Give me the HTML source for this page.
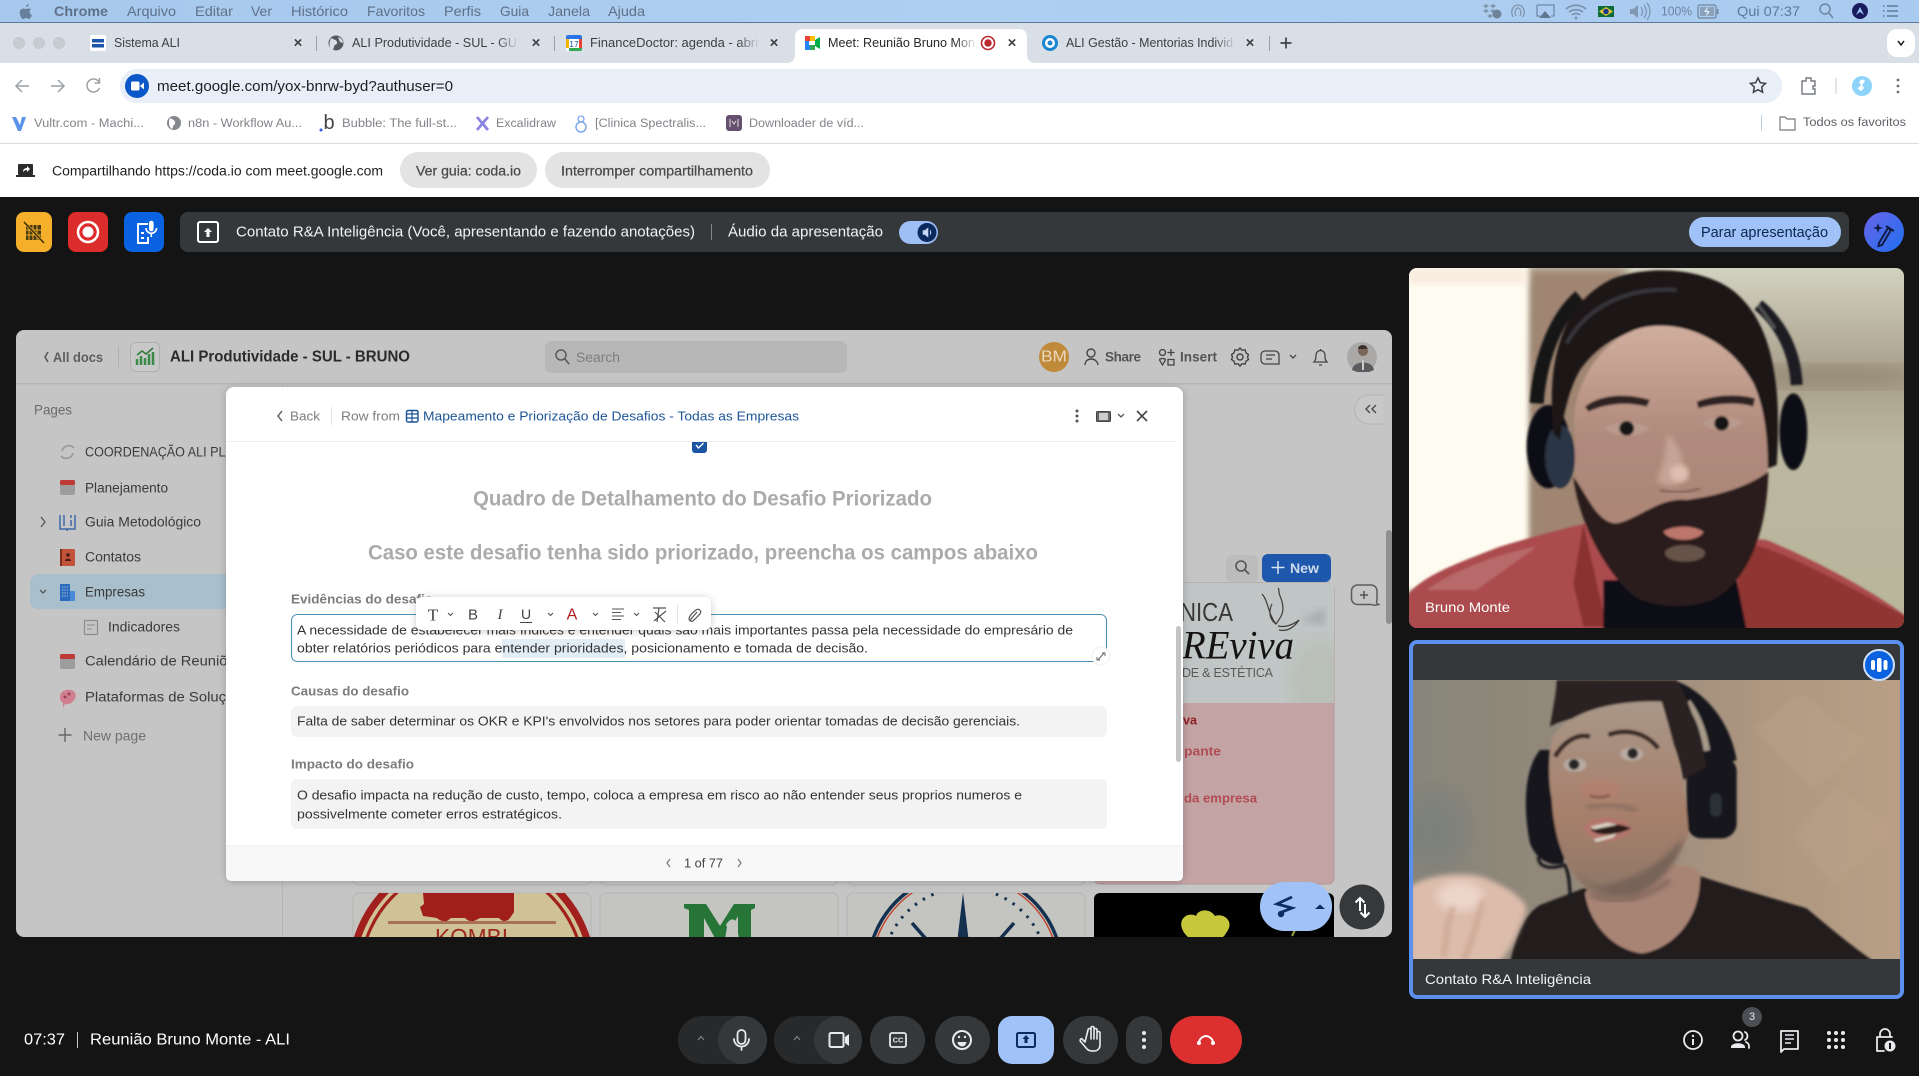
<!DOCTYPE html>
<html lang="pt-BR"><head><meta charset="utf-8"><title>Meet</title>
<style>
html,body{margin:0;padding:0;background:#141414;width:1919px;height:1076px;overflow:hidden}
svg{display:block}
text{font-family:"Liberation Sans",sans-serif;dominant-baseline:central;white-space:pre}
.m{font-size:14px;fill:#5f7088}
.t{font-size:12.5px;fill:#3c4043}
.x{font-size:15px;fill:#3c4043;font-weight:bold}
.bk{font-size:11.5px;fill:#808488}
.s{font-size:13px;fill:#8a8a8a}
.sd{font-size:13.5px;fill:#3a3a3a}
.body{font-size:13px;fill:#333}
.lab{font-size:13px;fill:#7c7c7c;font-weight:bold}
.w{fill:#fff}
.ic{fill:none;stroke:#e8eaed;stroke-width:2;stroke-linecap:round;stroke-linejoin:round}
</style></head><body>
<svg xmlns="http://www.w3.org/2000/svg" width="1919" height="1076" viewBox="0 0 1919 1076">
<defs>
<linearGradient id="mb" x1="0" y1="0" x2="1" y2="0"><stop offset="0" stop-color="#a5c8ec"/><stop offset=".5" stop-color="#afcff1"/><stop offset="1" stop-color="#a9cbef"/></linearGradient>
<linearGradient id="ai" x1="0" y1="0" x2="1" y2="1"><stop offset="0" stop-color="#6a64e8"/><stop offset="1" stop-color="#1f6ff0"/></linearGradient>
<linearGradient id="fadeg" x1="0" y1="0" x2="1" y2="0"><stop offset="0" stop-color="#d8dfe6" stop-opacity="0"/><stop offset="1" stop-color="#d8dfe6"/></linearGradient>
<linearGradient id="fadew" x1="0" y1="0" x2="1" y2="0"><stop offset="0" stop-color="#fff" stop-opacity="0"/><stop offset="1" stop-color="#fff"/></linearGradient>
<linearGradient id="wall1" x1="0" y1="0" x2="0" y2="1"><stop offset="0" stop-color="#d2d2c0"/><stop offset=".3" stop-color="#a89e8a"/><stop offset=".5" stop-color="#bcb8a0"/><stop offset="1" stop-color="#b8b59b"/></linearGradient>
<linearGradient id="wall2" x1="0" y1="0" x2="1" y2="0"><stop offset="0" stop-color="#87857a"/><stop offset=".35" stop-color="#94897a"/><stop offset=".7" stop-color="#ad9680"/><stop offset="1" stop-color="#b89f85"/></linearGradient>
<linearGradient id="skin1" x1="0" y1="0" x2="0" y2="1"><stop offset="0" stop-color="#d0ae9e"/><stop offset=".4" stop-color="#b08a7c"/><stop offset="1" stop-color="#a88272"/></linearGradient>
<linearGradient id="skin2" x1="0" y1="0" x2="0" y2="1"><stop offset="0" stop-color="#a99788"/><stop offset=".55" stop-color="#a8806c"/><stop offset="1" stop-color="#8d7767"/></linearGradient>
<filter id="b2"><feGaussianBlur stdDeviation="3"/></filter>
<filter id="b4"><feGaussianBlur stdDeviation="4"/></filter>
<filter id="b8"><feGaussianBlur stdDeviation="8"/></filter>
<filter id="b14"><feGaussianBlur stdDeviation="14"/></filter>
<filter id="b30"><feGaussianBlur stdDeviation="30"/></filter>
<filter id="sh" x="-20%" y="-20%" width="140%" height="140%"><feDropShadow dx="0" dy="1" stdDeviation="4" flood-color="#000" flood-opacity=".22"/></filter>
<clipPath id="coda"><rect x="16" y="330" width="1376" height="607" rx="8"/></clipPath>
<clipPath id="bt"><rect x="1409" y="268" width="495" height="360" rx="8"/></clipPath>
<clipPath id="ct"><rect x="1413" y="680" width="487" height="279"/></clipPath>
<clipPath id="box1"><rect x="1094" y="583" width="240" height="120"/></clipPath>
<clipPath id="kc"><rect x="353" y="893" width="238" height="44"/></clipPath>
<clipPath id="cc"><rect x="847" y="893" width="238" height="44"/></clipPath>
<clipPath id="bc"><rect x="1094" y="893" width="240" height="44"/></clipPath>
</defs>

<!-- mac menu bar -->
<rect width="1919" height="23" fill="url(#mb)"/>
<rect y="22" width="1919" height="1" fill="#5e7897"/>
<path d="M26 6c1-1 2-2 3-2 0 1-1 3-3 3zM22 9c1-1 3 0 4 0s3-1 5 0c-1 1-2 2-1 4 0 1 1 2 2 2-1 2-2 4-3 4s-2-1-3-1-2 1-3 1c-2 0-4-6-3-8 0-1 1-2 2-2z" fill="#69809c"/>
<text class="m" x="54" y="11" textLength="54" lengthAdjust="spacingAndGlyphs" font-weight="bold">Chrome</text>
<text class="m" x="127" y="11" textLength="49" lengthAdjust="spacingAndGlyphs">Arquivo</text>
<text class="m" x="195" y="11" textLength="38" lengthAdjust="spacingAndGlyphs">Editar</text>
<text class="m" x="251" y="11" textLength="21" lengthAdjust="spacingAndGlyphs">Ver</text>
<text class="m" x="291" y="11" textLength="57" lengthAdjust="spacingAndGlyphs">Histórico</text>
<text class="m" x="367" y="11" textLength="58" lengthAdjust="spacingAndGlyphs">Favoritos</text>
<text class="m" x="444" y="11" textLength="37" lengthAdjust="spacingAndGlyphs">Perfis</text>
<text class="m" x="500" y="11" textLength="29" lengthAdjust="spacingAndGlyphs">Guia</text>
<text class="m" x="548" y="11" textLength="42" lengthAdjust="spacingAndGlyphs">Janela</text>
<text class="m" x="608" y="11" textLength="37" lengthAdjust="spacingAndGlyphs">Ajuda</text>
<!-- menu right -->
<g fill="#7f95ae"><path d="M1483 6l3-2 3 2-3 2zM1490 6l3-2 3 2-3 2zM1483 11l3-2 3 2-3 2zM1490 11l3-2 3 2-3 2zM1487 16l3-2 3 2-3 2z"/><circle cx="1497" cy="14" r="4.5" fill="#6f8297"/></g>
<path d="M1513 17c-3-6 0-12 5-12s8 6 5 12M1516 16c-2-4 0-8 2-8s4 4 2 8" fill="none" stroke="#7f95ae" stroke-width="1.3"/>
<path d="M1537 5h17v11h-3M1540 16h-3V5" fill="none" stroke="#6f8aa8" stroke-width="1.3"/><path d="M1545 11l6 7h-12z" fill="#5f7690"/>
<path d="M1566 9c6-5 14-5 20 0M1569 12c4-3 10-3 14 0M1572 15c2-2 6-2 8 0" fill="none" stroke="#7a93ae" stroke-width="1.8"/><circle cx="1576" cy="18" r="1.5" fill="#7a93ae"/>
<rect x="1598" y="6" width="16" height="11" fill="#0c6b36"/><path d="M1606 7l7 4.5-7 4.5-7-4.5z" fill="#e6c53a"/><circle cx="1606" cy="11.5" r="2.8" fill="#1c3a86"/>
<path d="M1630 9h3l5-4v13l-5-4h-3z" fill="#8198b2"/><path d="M1641 7c2 3 2 6 0 9M1644 5c3 4 3 9 0 13M1647 3c4 5 4 12 0 17" fill="none" stroke="#7a93ae" stroke-width="1.2"/>
<text x="1661" y="11" font-size="13" fill="#6c84a0" textLength="31" lengthAdjust="spacingAndGlyphs">100%</text>
<rect x="1698" y="5" width="18" height="13" rx="2" fill="none" stroke="#6f879f" stroke-width="1.3"/><rect x="1700" y="7" width="14" height="9" fill="#8ba2ba"/><path d="M1708 6l-4 6h3l-1 5 4-6h-3z" fill="#d8e6f5"/><rect x="1717" y="9" width="1.5" height="5" fill="#6f879f"/>
<text x="1737" y="11" font-size="14" fill="#5f7a98" textLength="63" lengthAdjust="spacingAndGlyphs">Qui 07:37</text>
<circle cx="1825" cy="9" r="5" fill="none" stroke="#6c84a0" stroke-width="1.4"/><path d="M1829 13l4 5" stroke="#6c84a0" stroke-width="1.5"/>
<circle cx="1860" cy="11" r="8" fill="#181b5e"/><path d="M1856 15l4-8 4 8-4-3z" fill="#9dc4f0"/>
<path d="M1883 6h1.5M1887 6h11M1883 11h1.5M1887 11h11M1883 16h1.5M1887 16h11" stroke="#5f7a98" stroke-width="1.5"/>

<!-- tab strip -->
<rect y="23" width="1919" height="40" fill="#d8dfe6"/>
<g fill="#c6ccd2" stroke="#bcc2c8" stroke-width=".6"><circle cx="19" cy="43" r="5.5"/><circle cx="39" cy="43" r="5.5"/><circle cx="59" cy="43" r="5.5"/></g>
<!-- tab1 -->
<rect x="90" y="35" width="16" height="16" rx="2" fill="#fff"/><rect x="92" y="39" width="12" height="3.5" fill="#1a56a8"/><rect x="92" y="44" width="12" height="3.5" fill="#1a56a8"/>
<text class="t" x="114" y="43" textLength="66" lengthAdjust="spacingAndGlyphs">Sistema ALI</text>
<text class="x" x="298" y="43" text-anchor="middle">×</text>
<rect x="316" y="36" width="1" height="15" fill="#9aa0a6"/>
<!-- tab2 -->
<circle cx="336" cy="43" r="7.5" fill="#55595e"/><path d="M331 38c3 2 5 1 6 4s-3 2-3 5l-1 3c-3-1-5-5-2-12zM338 37c3 1 5 3 5 6l-3-1z" fill="#d8dfe6"/>
<text class="t" x="352" y="43" textLength="165" lengthAdjust="spacingAndGlyphs">ALI Produtividade - SUL - GU</text>
<rect x="497" y="36" width="22" height="15" fill="url(#fadeg)"/>
<text class="x" x="536" y="43" text-anchor="middle">×</text>
<rect x="554" y="36" width="1" height="15" fill="#9aa0a6"/>
<!-- tab3 -->
<rect x="566" y="35" width="16" height="16" rx="2" fill="#fff"/><path d="M566 37a2 2 0 012-2h12a2 2 0 012 2v2h-16z" fill="#2a73e8"/><path d="M566 39h3v9h-3z" fill="#f3b400"/><path d="M579 39h3v9h-3z" fill="#ea4335"/><path d="M569 48h13v1a2 2 0 01-2 2h-11z" fill="#34a853"/>
<text x="574" y="44" font-size="8.5" fill="#1a56a8" text-anchor="middle">17</text>
<text class="t" x="590" y="43" textLength="168" lengthAdjust="spacingAndGlyphs">FinanceDoctor: agenda - abri</text>
<rect x="738" y="36" width="22" height="15" fill="url(#fadeg)"/>
<text class="x" x="774" y="43" text-anchor="middle">×</text>
<!-- active tab -->
<path d="M786 63c6 0 9-3 9-9V37c0-5 3-8 8-8h216c5 0 8 3 8 8v17c0 6 3 9 9 9z" fill="#fff"/>
<rect x="805" y="36" width="14" height="14" rx="2" fill="#fff"/><path d="M805 36h5v5h-5z" fill="#ea4335"/><path d="M810 36h5v5h-5z" fill="#fbbc04"/><path d="M805 41h5v9h-5z" fill="#2684fc"/><path d="M810 45h5v5h-5z" fill="#34a853"/><path d="M815 40l5-3v12l-5-3z" fill="#00ac47"/><rect x="809" y="41" width="5" height="4" fill="#fff"/>
<text x="828" y="43" font-size="12.5" fill="#27292c" textLength="147" lengthAdjust="spacingAndGlyphs">Meet: Reunião Bruno Mon</text>
<rect x="955" y="36" width="22" height="15" fill="url(#fadew)"/>
<circle cx="988" cy="43" r="6.5" fill="none" stroke="#b9292d" stroke-width="1.6"/><circle cx="988" cy="43" r="3.7" fill="#b9292d"/>
<text class="x" x="1012" y="43" text-anchor="middle" fill="#222">×</text>
<!-- tab5 -->
<circle cx="1050" cy="43" r="8" fill="#1a86d0"/><circle cx="1050" cy="43" r="5" fill="#fff"/><circle cx="1050" cy="43" r="2.5" fill="#1a86d0"/>
<text class="t" x="1066" y="43" textLength="167" lengthAdjust="spacingAndGlyphs">ALI Gestão - Mentorias Individ</text>
<rect x="1214" y="36" width="22" height="15" fill="url(#fadeg)"/>
<text class="x" x="1250" y="43" text-anchor="middle">×</text>
<rect x="1269" y="36" width="1" height="15" fill="#9aa0a6"/>
<path d="M1286 37.5v11M1280.5 43h11" stroke="#3c4043" stroke-width="1.7"/>
<rect x="1887" y="29" width="28" height="28" rx="10" fill="#fff"/><path d="M1898 41l3 4 3-4" fill="none" stroke="#222" stroke-width="1.5"/>

<!-- address row -->
<rect y="63" width="1919" height="81" fill="#fff"/>
<path d="M786 63h-786v-1h786zM1036 62h883v1h-883z" fill="#d8dfe6"/>
<path d="M29 86H16M22 80l-6 6 6 6" fill="none" stroke="#9aa0a6" stroke-width="1.5"/>
<path d="M51 86h13M58 80l6 6-6 6" fill="none" stroke="#9aa0a6" stroke-width="1.5"/>
<path d="M99 82a6.5 6.5 0 10.5 6M99.5 78v5h-5" fill="none" stroke="#9aa0a6" stroke-width="1.5"/>
<rect x="120" y="69" width="1662" height="34" rx="17" fill="#e8eff9"/>
<circle cx="137" cy="86" r="12" fill="#0b57c8"/><rect x="131" y="81.5" width="8.5" height="9" rx="1.5" fill="#fff"/><path d="M140 86l4-3.5v7z" fill="#fff"/>
<text x="157" y="87" font-size="14.5" fill="#1f1f1f" textLength="296" lengthAdjust="spacingAndGlyphs">meet.google.com/yox-bnrw-byd?authuser=0</text>
<path d="M1759 79l2.300 4.700 5.200.7-3.800 3.600.9 5.200-4.600-2.500-4.600 2.500.9-5.200-3.800-3.600 5.200-.7z" fill="none" stroke="#3c4043" stroke-width="1.5" transform="translate(-1 -1)"/>
<path d="M1802 81h4v-3h5v3h4v5h-2v3h2v5h-13z" fill="none" stroke="#75797e" stroke-width="1.4"/>
<rect x="1835.5" y="78" width="1" height="16" fill="#c8ced4"/>
<circle cx="1862" cy="86" r="10" fill="#8ed4fa"/><path d="M1861 80c2-1 4 0 4 1l-3 4 2 3-3 3c-2-1-3-2-3-3l3-3-2-3z" fill="#fff"/>
<g fill="#6c7075"><circle cx="1898" cy="80" r="1.4"/><circle cx="1898" cy="86" r="1.4"/><circle cx="1898" cy="92" r="1.4"/></g>

<!-- bookmarks -->
<path d="M12 117h4l4 8 2-8h4l-5 14h-3z" fill="#5a94e8"/>
<text class="bk" x="34" y="124" textLength="110" lengthAdjust="spacingAndGlyphs">Vultr.com - Machi...</text>
<circle cx="174" cy="123" r="7" fill="#84888c"/><path d="M170 118c3 2 4 1 5 4s-2 2-2 5l-1 2c-3-2-4-6-2-11z" fill="#fff"/>
<text class="bk" x="188" y="124" textLength="114" lengthAdjust="spacingAndGlyphs">n8n - Workflow Au...</text>
<text x="329" y="123" font-size="20" fill="#444" text-anchor="middle">b</text><circle cx="321" cy="130" r="1.5" fill="#2f5be0"/>
<text class="bk" x="342" y="124" textLength="115" lengthAdjust="spacingAndGlyphs">Bubble: The full-st...</text>
<path d="M477 117l11 13M488 117l-11 13" stroke="#8a85e0" stroke-width="2.800"/>
<text class="bk" x="496" y="124" textLength="60" lengthAdjust="spacingAndGlyphs">Excalidraw</text>
<circle cx="581" cy="127" r="5" fill="none" stroke="#7fa8ea" stroke-width="1.5"/><circle cx="581" cy="119" r="3" fill="none" stroke="#7fa8ea" stroke-width="1.3"/>
<text class="bk" x="595" y="124" textLength="111" lengthAdjust="spacingAndGlyphs">[Clinica Spectralis...</text>
<rect x="726" y="115" width="16" height="16" rx="3" fill="#65506f"/><path d="M730 119v8M738 119v8M732 121l2 3 2-3" stroke="#ddd" fill="none"/>
<text class="bk" x="749" y="124" textLength="115" lengthAdjust="spacingAndGlyphs">Downloader de víd...</text>
<rect x="1761" y="115" width="1" height="16" fill="#bcd0ea"/>
<path d="M1780 117h5l2 2h8v11h-15z" fill="none" stroke="#75797e" stroke-width="1.2"/>
<text class="bk" x="1803" y="123" textLength="103" lengthAdjust="spacingAndGlyphs" style="fill:#5f6368">Todos os favoritos</text>
<rect y="143" width="1919" height="1" fill="#dcdcdc"/>

<!-- sharing bar -->
<rect y="144" width="1919" height="53" fill="#fff"/>
<rect x="18" y="164" width="15" height="11" rx="1" fill="#2b2b2b"/><rect x="16" y="175" width="19" height="2" fill="#2b2b2b"/><path d="M23 172c0-3 2-4 4-4v-2l3 3-3 3v-2c-2 0-3 1-4 2z" fill="#fff"/>
<text x="52" y="171" font-size="13.5" fill="#202124" textLength="331" lengthAdjust="spacingAndGlyphs">Compartilhando https://coda.io com meet.google.com</text>
<rect x="400" y="152" width="137" height="36" rx="18" fill="#e3e3e3"/>
<text x="416" y="171" font-size="13.5" fill="#4a4a4a" stroke="#4a4a4a" stroke-width=".25" textLength="105" lengthAdjust="spacingAndGlyphs">Ver guia: coda.io</text>
<rect x="545" y="152" width="225" height="36" rx="18" fill="#e3e3e3"/>
<text x="561" y="171" font-size="13.5" fill="#4a4a4a" stroke="#4a4a4a" stroke-width=".25" textLength="192" lengthAdjust="spacingAndGlyphs">Interromper compartilhamento</text>

<!-- meet top -->
<rect y="197" width="1919" height="879" fill="#141414"/>
<rect x="16" y="212" width="36" height="40" rx="8" fill="#f5af2b"/>
<rect x="26" y="225" width="15" height="15" fill="#4a3a10"/><path d="M29 225v15M33 225v15M37 225v15M26 230h15M26 235h15" stroke="#f5af2b"/><path d="M24 222l20 21" stroke="#f5af2b" stroke-width="3"/><path d="M24 222l20 21" stroke="#3a2d08" stroke-width="1.5"/>
<rect x="68" y="212" width="40" height="40" rx="8" fill="#dc2c2c"/><circle cx="88" cy="232" r="10" fill="none" stroke="#fff" stroke-width="2.5"/><circle cx="88" cy="232" r="5.5" fill="#fff"/>
<rect x="124" y="212" width="40" height="40" rx="8" fill="#0b62e0"/><path d="M148 224h-10v19h10v-6M141 233h3M141 238h3" fill="none" stroke="#fff" stroke-width="1.900"/><path d="M149 223a2.300 2.300 0 014.600 0v6a2.300 2.300 0 01-4.600 0z" fill="#fff"/><path d="M146 228a5.300 5.300 0 0010.600 0M151.300 234v3" fill="none" stroke="#fff" stroke-width="1.6"/>
<rect x="180" y="212" width="1669" height="40" rx="8" fill="#35383b"/>
<rect x="198" y="222" width="20" height="20" rx="2" fill="none" stroke="#fff" stroke-width="2"/><path d="M208 228l4 4h-2.500v5h-3v-5H204z" fill="#fff"/>
<text class="w" x="236" y="232" font-size="15" textLength="459" lengthAdjust="spacingAndGlyphs" style="fill:#f1f3f4">Contato R&amp;A Inteligência (Você, apresentando e fazendo anotações)</text>
<rect x="711" y="224" width="1" height="16" fill="#80868b"/>
<text x="728" y="232" font-size="15" fill="#f1f3f4" textLength="155" lengthAdjust="spacingAndGlyphs">Áudio da apresentação</text>
<rect x="899" y="221" width="39" height="23" rx="11.5" fill="#9dbff5"/><circle cx="927" cy="232.5" r="9.5" fill="#0b2a5e"/><path d="M923 230.5h2l3-2.500v9l-3-2.500h-2zM930 230c1 1.500 1 3.500 0 5" fill="#c6d8f6" stroke="#c6d8f6" stroke-width=".6"/>
<rect x="1689" y="217" width="152" height="30" rx="15" fill="#a0c2f8"/>
<text x="1701" y="233" font-size="14.5" fill="#0b2550" textLength="127" lengthAdjust="spacingAndGlyphs">Parar apresentação</text>
<circle cx="1884" cy="232" r="20" fill="url(#ai)"/><path d="M1879 243l9-15 3 2-9 15-3.500 1zM1886 226l8 5" fill="none" stroke="#111c44" stroke-width="2"/><path d="M1878 223l1.300 3.700 3.700 1.300-3.700 1.300-1.300 3.700-1.300-3.700-3.700-1.300 3.700-1.300z" fill="#111c44"/>

<!-- CODA -->
<g clip-path="url(#coda)">
<rect x="16" y="330" width="1376" height="607" fill="#c5c5c5"/>
<rect x="16" y="383" width="1376" height="1.5" fill="#b7b7b7"/>
<rect x="282" y="383" width="1" height="554" fill="#b5b5b5"/>

<!-- cards row 1 -->
<rect x="353" y="800" width="238" height="85" rx="6" fill="#c5c5c5" stroke="#b4b4b4"/>
<rect x="600" y="800" width="238" height="85" rx="6" fill="#c5c5c5" stroke="#b4b4b4"/>
<rect x="847" y="800" width="238" height="85" rx="6" fill="#c5c5c5" stroke="#b4b4b4"/>
<rect x="1094" y="583" width="240" height="301" rx="6" fill="#c3a3a4" stroke="#b59696"/>
<g clip-path="url(#box1)">
<rect x="1094" y="583" width="240" height="120" fill="#c0c5c5"/>
<ellipse cx="1320" cy="680" rx="30" ry="40" fill="#b9c0b7" filter="url(#b8)"/>
<path d="M1300 620l25-12v18z" fill="#a8adae" filter="url(#b4)"/>
<text x="1180" y="612" font-size="26" fill="#3a3838" textLength="53" lengthAdjust="spacingAndGlyphs">NICA</text>
<text x="1182" y="645" font-size="40" fill="#141212" font-family="Liberation Serif" font-style="italic" style="font-family:'Liberation Serif',serif" textLength="112" lengthAdjust="spacingAndGlyphs">REviva</text>
<text x="1182" y="673" font-size="12.5" fill="#5a5a5a" textLength="91" lengthAdjust="spacing">DE &amp; ESTÉTICA</text>
<path d="M1262 594c6 6 6 20 14 30 6-8 10-14 4-28-2-4 0-6-2-8M1272 604c-4 8-2 16 4 20M1278 626c8 2 16-2 21-6-4 6-10 12-20 10" fill="none" stroke="#433c3c" stroke-width="1.2"/>
</g>
<text x="1183" y="720" font-size="13" font-weight="bold" fill="#8e1d22" textLength="14" lengthAdjust="spacingAndGlyphs">va</text>
<text x="1184" y="751" font-size="13" font-weight="bold" fill="#b14c52" textLength="37" lengthAdjust="spacingAndGlyphs">pante</text>
<text x="1184" y="798" font-size="13" font-weight="bold" fill="#b14c52" textLength="73" lengthAdjust="spacingAndGlyphs">da empresa</text>

<!-- cards row 2 -->
<rect x="353" y="893" width="238" height="60" rx="6" fill="#c4c4c1" stroke="#b4b4b4"/>
<g clip-path="url(#kc)">
<path d="M351.700 945A124 124 0 01592.300 945z" fill="#a11f1c"/>
<path d="M359 945A117 117 0 01585 945z" fill="#cfc296"/>
<path d="M363 945A113 113 0 01581 945z" fill="#a11f1c"/>
<path d="M366.200 945A110 110 0 01577.800 945z" fill="#cfc296"/>
<path d="M423 893h91v19l-4 6c-3 4-8 4-11 0h-19l-6 3c-4 1-7-1-9-3h-14l-4 3c-4 1-8-1-10-3l-14-2-3-9 4-3z" fill="#a01f1b"/>
<rect x="388" y="921" width="168" height="3" fill="#a9715a"/>
<text x="435" y="938" font-size="24" fill="#9c2a22" textLength="73" lengthAdjust="spacingAndGlyphs">KOMBI</text>
</g>
<rect x="600" y="893" width="238" height="60" rx="6" fill="#c4c4c1" stroke="#b4b4b4"/>
<path d="M684 904h22l14 22 14-22h21v4l-4 2v30h-13v-24l-13 24h-9l-12-22v22h-15v-30l-5-2z" fill="#267536"/>
<path d="M729 921c4-4 9 0 8 6l2 12h-14l2-12c-2-2 0-4 2-6z" fill="#c4c4c1"/>
<rect x="847" y="893" width="238" height="60" rx="6" fill="#c4c4c1" stroke="#b4b4b4"/>
<g clip-path="url(#cc)">
<circle cx="965" cy="970" r="97" fill="none" stroke="#14304f" stroke-width="3.5"/>
<circle cx="965" cy="970" r="93.5" fill="none" stroke="#c0472f" stroke-width="1.5"/>
<circle cx="965" cy="970" r="82" fill="none" stroke="#14304f" stroke-width="3" stroke-dasharray="2.5 7"/>
<path d="M963 893l-6 50h12z" fill="#14304f"/>
<path d="M912 923l14 16M1014 923l-14 16" stroke="#14304f" stroke-width="3.5"/>
</g>
<rect x="1094" y="893" width="240" height="60" rx="6" fill="#000"/>
<g clip-path="url(#bc)"><path d="M1188 937c-9-8-9-19 0-22 4-1 7 0 8 1 2-7 14-8 19 0 8-3 17 4 14 12-2 4-4 7-6 9z" fill="#c8c83d"/></g>
<path d="M1292 936l4-8" stroke="#9a9a3a" stroke-width="2"/>

<!-- header -->
<path d="M48 352l-3 5 3 5" fill="none" stroke="#555" stroke-width="1.5"/>
<text x="53" y="357" font-size="14" font-weight="bold" fill="#5e5e5e" textLength="50" lengthAdjust="spacingAndGlyphs">All docs</text>
<rect x="118" y="347" width="1" height="20" fill="#b0b0b0"/>
<rect x="130.5" y="342.5" width="29" height="29" rx="5" fill="#c8c8c8" stroke="#b0b0b0"/>
<path d="M137 365v-6M141 365v-9M145 365v-7M149 365v-11M153 365v-13" stroke="#3a8a48" stroke-width="2.5"/><path d="M137 355l5-4 4 3 7-6" fill="none" stroke="#2e7a3b" stroke-width="1.5"/>
<text x="170" y="357" font-size="16" font-weight="bold" fill="#2b2b2b" textLength="240" lengthAdjust="spacingAndGlyphs">ALI Produtividade - SUL - BRUNO</text>
<rect x="545" y="341" width="302" height="32" rx="6" fill="#b7b7b7"/>
<circle cx="561" cy="355" r="5" fill="none" stroke="#5a5a5a" stroke-width="1.5"/><path d="M565 359l4 5" stroke="#5a5a5a" stroke-width="1.7"/>
<text x="576" y="357" font-size="14" fill="#7d7d7d" textLength="44" lengthAdjust="spacingAndGlyphs">Search</text>
<circle cx="1054" cy="357" r="15" fill="#bf8a3a"/><text x="1054" y="357" font-size="16" fill="#ead9bd" text-anchor="middle" textLength="26" lengthAdjust="spacingAndGlyphs">BM</text>
<circle cx="1091" cy="353" r="4" fill="none" stroke="#444" stroke-width="1.4"/><path d="M1085 365c0-8 12-8 13 0" fill="none" stroke="#444" stroke-width="1.4"/>
<text x="1105" y="357" font-size="13.5" font-weight="bold" fill="#555" textLength="36">Share</text>
<g fill="none" stroke="#444" stroke-width="1.3"><circle cx="1162.500" cy="352.500" r="3"/><path d="M1171 349v7M1167.500 352.500h7M1159.500 360c0-2 6-2 6 0l-3 5zM1168 359.500h6v5.500h-6z"/></g>
<text x="1180" y="357" font-size="13.5" font-weight="bold" fill="#555" textLength="37">Insert</text>
<g transform="translate(0 -1)" fill="none" stroke="#444" stroke-width="1.4"><circle cx="1240" cy="358" r="3"/><path d="M1240 349l2 2.300 3-.5 1 3 2.500 1.700-1 2.500 1 2.500-2.500 1.700-1 3-3-.5-2 2.300-2-2.300-3 .5-1-3-2.500-1.700 1-2.500-1-2.500 2.500-1.700 1-3 3 .5z"/></g>
<path d="M1265 351h10a4 4 0 014 4v9h-14a4 4 0 01-4-4v-5a4 4 0 014-4zM1266 355h9M1266 359h6" fill="none" stroke="#444" stroke-width="1.3"/>
<path d="M1290 355l3 3 3-3" fill="none" stroke="#444" stroke-width="1.3"/>
<path d="M1314 362c2-2 2-5 2-7a4.500 4.500 0 019 0c0 3 0 5 2 7zM1320.500 350v-1M1319 365h3" fill="none" stroke="#444" stroke-width="1.3"/>
<circle cx="1362" cy="357" r="15" fill="#aaa9a7"/><circle cx="1363" cy="351" r="5" fill="#7a6558"/><path d="M1363 345a5 4 0 014.500 4l-9.500 0a5 4 0 015-4z" fill="#3a302a"/><path d="M1352 370c1-10 21-10 22 0l-5 2h-12z" fill="#5a5c60"/><path d="M1362 360l2 0 0 10-2 0z" fill="#ccc"/>
<path d="M1383 395h-14a14 14 0 000 29h14" fill="#c8c8c8" stroke="#b4b4b4"/>
<path d="M1370 405l-4 4 4 4M1376 405l-4 4 4 4" fill="none" stroke="#4a4a4a" stroke-width="1.4"/>
<rect x="1386" y="530" width="6" height="94" rx="3" fill="#8f8f8f"/>

<!-- sidebar -->
<text x="34" y="410" font-size="13.5" fill="#6b6b6b" textLength="38" lengthAdjust="spacingAndGlyphs">Pages</text>
<rect x="30" y="574" width="210" height="35" rx="8" fill="#a9bfcc"/>
<path d="M74 448a7 7 0 00-12 3M61 456a7 7 0 0012-3" fill="none" stroke="#9b9b9b" stroke-width="1.7"/>
<text class="sd" x="85" y="452" textLength="158" lengthAdjust="spacingAndGlyphs">COORDENAÇÃO ALI PLAN</text>
<g><rect x="60" y="480" width="15" height="15" rx="2" fill="#9d9d9d"/><rect x="60" y="480" width="15" height="5" rx="1.5" fill="#bf3a36"/></g>
<text class="sd" x="85" y="488" textLength="83" lengthAdjust="spacingAndGlyphs">Planejamento</text>
<path d="M41 517l4 5-4 5" fill="none" stroke="#555" stroke-width="1.3"/>
<path d="M60 515v14h15v-14M67 529v2M64 515v11M71 515v3M71 520v6" fill="none" stroke="#3f6aa8" stroke-width="1.5"/>
<text class="sd" x="85" y="522" textLength="116" lengthAdjust="spacingAndGlyphs">Guia Metodológico</text>
<rect x="60" y="549" width="15" height="17" rx="1.5" fill="#c1533a"/><rect x="60" y="549" width="2" height="17" fill="#7e2f1d"/><circle cx="68" cy="555" r="1.8" fill="#4b1b0f"/><path d="M65 561c0-3 6-3 6 0z" fill="#4b1b0f"/>
<text class="sd" x="85" y="557" textLength="56" lengthAdjust="spacingAndGlyphs">Contatos</text>
<path d="M40 590l3 3 3-3" fill="none" stroke="#555" stroke-width="1.3"/>
<rect x="60" y="584" width="10" height="17" fill="#2c6cc0"/><rect x="70" y="591" width="5" height="10" fill="#4a8ad8"/><path d="M62 587h6M62 590h6M62 593h6M62 596h6" stroke="#a9bfcc" stroke-dasharray="1.5 1"/>
<text class="sd" x="85" y="592" textLength="60" lengthAdjust="spacingAndGlyphs">Empresas</text>
<rect x="84.5" y="620.5" width="13" height="14" rx="1" fill="none" stroke="#8c8c8c" stroke-width="1.2"/><path d="M87 625h8M87 629h5" stroke="#8c8c8c"/>
<text class="sd" x="108" y="627" textLength="72" lengthAdjust="spacingAndGlyphs">Indicadores</text>
<rect x="60" y="654" width="15" height="15" rx="2" fill="#9d9d9d"/><rect x="60" y="654" width="15" height="5" rx="1.5" fill="#bf3a36"/>
<text class="sd" x="85" y="661" textLength="158" lengthAdjust="spacingAndGlyphs">Calendário de Reuniões</text>
<path d="M60 697c0-5 5-8 10-7 5 0 7 5 5 9-3 4-6 6-10 5l-2 4v-5c-2-1-3-3-3-6z" fill="#cf7f8f"/><circle cx="65" cy="697" r="1.5" fill="#a03f5c"/><circle cx="69" cy="694" r="1.5" fill="#a03f5c"/>
<text class="sd" x="85" y="697" textLength="165" lengthAdjust="spacingAndGlyphs">Plataformas de Soluções</text>
<path d="M65 728v14M58.5 735h13" stroke="#666" stroke-width="1.4"/>
<text x="83" y="736" font-size="13.5" fill="#707070" textLength="63" lengthAdjust="spacingAndGlyphs">New page</text>

<!-- right controls -->
<rect x="1226" y="555" width="32" height="27" rx="6" fill="#bcbcbc"/>
<circle cx="1241" cy="566" r="5" fill="none" stroke="#555" stroke-width="1.6"/><path d="M1245 570l4 4" stroke="#555" stroke-width="1.8"/>
<rect x="1262" y="554" width="69" height="28" rx="6" fill="#1e58ac"/>
<path d="M1278 561v13M1271.500 567.500h13" stroke="#d8e2f0" stroke-width="1.5"/>
<text x="1290" y="568" font-size="14" font-weight="bold" fill="#cfdbec" textLength="29" lengthAdjust="spacingAndGlyphs">New</text>
<path d="M1357 585h14a6 6 0 016 6v9a3 3 0 001.5 4.5c-3 1-5 1-7 0h-14a6 6 0 01-6-6v-8a6 6 0 016-5.500z" fill="none" stroke="#5c5c5c" stroke-width="1.5"/><path d="M1364 591v8M1360 595h8" stroke="#555" stroke-width="1.5"/>
<rect x="1260" y="882" width="72" height="49" rx="24" fill="#a0c2f8"/>
<path d="M1292 897l-15 7 15 4-10 4" fill="none" stroke="#0c2c63" stroke-width="2.800"/><circle cx="1281" cy="914" r="3.200" fill="#0c2c63"/>
<path d="M1315 909h10l-5-4.500z" fill="#0c2c63"/>
<circle cx="1362" cy="907" r="22.5" fill="#36393b"/>
<path d="M1360 911v-13M1355.500 902.500l4.500-4.500 4.500 4.500M1365 904v13M1360.500 912.500l4.500 4.500 4.500-4.500" fill="none" stroke="#fff" stroke-width="2"/>

<!-- modal -->
<rect x="226" y="387" width="957" height="494" rx="8" fill="#fff" filter="url(#sh)"/>
<path d="M231 881a5 5 0 01-5-5v-30h957v30a5 5 0 01-5 5z" fill="#f8f8f8"/>
<rect x="226" y="845.5" width="957" height="1" fill="#eeeeee"/>
<rect x="226" y="441" width="950" height="1" fill="#efefef"/>
<path d="M282 411l-4 5 4 5" fill="none" stroke="#666" stroke-width="1.5"/>
<text x="290" y="416" font-size="13" fill="#7d7d7d" textLength="30" lengthAdjust="spacingAndGlyphs">Back</text>
<rect x="331" y="407" width="1" height="18" fill="#e4e4e4"/>
<text x="341" y="416" font-size="13" fill="#7d7d7d" textLength="59" lengthAdjust="spacingAndGlyphs">Row from</text>
<rect x="406.5" y="410.5" width="11.5" height="11.5" rx="1.5" fill="none" stroke="#1a5296" stroke-width="1.4"/><path d="M407 414h11M407 418h11M412 411v11" stroke="#1a5296" stroke-width="1.2"/>
<text x="423" y="416" font-size="13" fill="#1d5598" textLength="376" lengthAdjust="spacingAndGlyphs">Mapeamento e Priorização de Desafios - Todas as Empresas</text>
<g fill="#555"><circle cx="1077" cy="411" r="1.5"/><circle cx="1077" cy="416" r="1.5"/><circle cx="1077" cy="421" r="1.5"/></g>
<rect x="1096.5" y="411.5" width="14" height="10" rx="1" fill="#666" stroke="#444"/><rect x="1099" y="413" width="9" height="7" fill="#ccc"/>
<path d="M1118 414l3 3 3-3" fill="none" stroke="#555" stroke-width="1.3"/>
<path d="M1137 411l10 10M1147 411l-10 10" stroke="#444" stroke-width="1.6"/>
<path d="M692 442h15v8a3 3 0 01-3 3h-9a3 3 0 01-3-3z" fill="#1b55a4"/><path d="M696 445l2.500 3 5-5" fill="none" stroke="#fff" stroke-width="1.4"/>
<text x="473" y="499" font-size="21" font-weight="bold" fill="#ababab" textLength="459" lengthAdjust="spacingAndGlyphs">Quadro de Detalhamento do Desafio Priorizado</text>
<text x="368" y="553" font-size="21" font-weight="bold" fill="#ababab" textLength="670" lengthAdjust="spacingAndGlyphs">Caso este desafio tenha sido priorizado, preencha os campos abaixo</text>
<text class="lab" x="291" y="599" textLength="142" lengthAdjust="spacingAndGlyphs">Evidências do desafio</text>
<rect x="291.5" y="614.5" width="815" height="47" rx="6" fill="#fff" stroke="#4a92b8" stroke-width="1.1"/>
<rect x="502" y="639" width="123" height="19" fill="#e3edf6"/>
<text class="body" x="297" y="630" textLength="776" lengthAdjust="spacingAndGlyphs">A necessidade de estabelecer mais índices e entender quais são mais importantes passa pela necessidade do empresário de</text>
<text class="body" x="297" y="648" textLength="571" lengthAdjust="spacingAndGlyphs">obter relatórios periódicos para entender prioridades, posicionamento e tomada de decisão.</text>
<circle cx="1101" cy="656" r="9" fill="#fff" stroke="#efefef"/><path d="M1098 660l6-7M1102 653h3v3M1097 657v3h3" fill="none" stroke="#666"/>
<text class="lab" x="291" y="691" textLength="118" lengthAdjust="spacingAndGlyphs">Causas do desafio</text>
<rect x="291" y="706" width="816" height="31" rx="6" fill="#f3f3f3"/>
<text class="body" x="297" y="721" textLength="723" lengthAdjust="spacingAndGlyphs">Falta de saber determinar os OKR e KPI's envolvidos nos setores para poder orientar tomadas de decisão gerenciais.</text>
<text class="lab" x="291" y="764" textLength="123" lengthAdjust="spacingAndGlyphs">Impacto do desafio</text>
<rect x="291" y="779" width="816" height="50" rx="6" fill="#f3f3f3"/>
<text class="body" x="297" y="795" textLength="725" lengthAdjust="spacingAndGlyphs">O desafio impacta na redução de custo, tempo, coloca a empresa em risco ao não entender seus proprios numeros e</text>
<text class="body" x="297" y="814" textLength="265" lengthAdjust="spacingAndGlyphs">possivelmente cometer erros estratégicos.</text>
<rect x="1176" y="626" width="5" height="136" rx="2.5" fill="#c4c4c4"/>
<path d="M670 859l-3 4 3 4M738 859l3 4-3 4" fill="none" stroke="#777" stroke-width="1.2"/>
<text x="684" y="863" font-size="13" fill="#444" textLength="39" lengthAdjust="spacingAndGlyphs">1 of 77</text>

<!-- floating toolbar -->
<rect x="416" y="597" width="295" height="33" rx="6" fill="#fff" filter="url(#sh)"/>
<text x="433" y="615" font-size="17" fill="#444" text-anchor="middle" style="font-family:'Liberation Serif',serif">T</text>
<path d="M448 613l2.500 2.500 2.500-2.500M548 613l2.500 2.500 2.500-2.500M593 613l2.500 2.500 2.500-2.500M634 613l2.500 2.500 2.500-2.500" fill="none" stroke="#555" stroke-width="1.1"/>
<text x="473" y="615" font-size="15" fill="#444" text-anchor="middle">B</text>
<text x="500" y="615" font-size="15" fill="#444" text-anchor="middle" font-style="italic" style="font-family:'Liberation Serif',serif">I</text>
<text x="526" y="614" font-size="14" fill="#444" text-anchor="middle">U</text><rect x="520" y="622" width="12" height="1" fill="#444"/>
<text x="572" y="615" font-size="16" fill="#b01c1c" text-anchor="middle">A</text>
<path d="M612 609h12M612 612.500h9M612 616h12M612 619.500h9" stroke="#555" stroke-width="1.1"/>
<path d="M653 608h13M659 608l-2 14M654 621l12-10M655 612l10 10" fill="none" stroke="#555" stroke-width="1.2"/>
<rect x="677" y="605" width="1" height="18" fill="#e2e2e2"/>
<path d="M690 621c-3-3 2-8 6-11 3-2 6 1 4 4l-7 7c-2 1-3 0-2-2l6-7" fill="none" stroke="#555" stroke-width="1.2"/>
</g>

<!-- Bruno tile -->
<g clip-path="url(#bt)">
<rect x="1409" y="268" width="495" height="360" fill="url(#wall1)"/>
<g transform="translate(1400 260) scale(.33333)">
<rect x="380" y="24" width="300" height="830" fill="#9f8572" filter="url(#b14)"/>
<rect x="-10" y="-10" width="395" height="1000" fill="#fefcf0" filter="url(#b8)"/>
<rect x="20" y="24" width="360" height="50" fill="#f5dfd2" opacity=".6" filter="url(#b14)"/>
<ellipse cx="1300" cy="350" rx="260" ry="35" fill="#958a76" filter="url(#b30)"/>
<g filter="url(#b2)">
<path d="M20 1010c40-60 150-100 280-150 100-30 170-50 260-70l540 50c120 50 300 140 420 230v50H20z" fill="#ab4c4e"/>
<path d="M1010 840c150 30 350 150 510 230v40h-500z" fill="#8f3633"/>
<path d="M80 990c80-60 220-110 330-130l-180 130z" fill="#b8696a"/>
<path d="M520 970l30-180 70 310h-70z" fill="#8a3030"/>
<path d="M610 960h400l30 150H610z" fill="#0c0d16"/>
<!-- headphones left -->
<ellipse cx="445" cy="560" rx="65" ry="125" fill="#0d0e13"/>
<ellipse cx="480" cy="590" rx="45" ry="95" fill="#2b3444"/>
<path d="M410 430C420 290 470 170 540 110" fill="none" stroke="#141418" stroke-width="42"/>
<!-- right -->
<ellipse cx="1180" cy="515" rx="42" ry="115" fill="#0e0e13"/>
<path d="M1075 135c60 50 110 130 115 240" fill="none" stroke="#1c1c22" stroke-width="36"/>
<path d="M1075 135l50 70" stroke="#55565a" stroke-width="8"/>
<!-- hair -->
<path d="M460 520C440 310 480 130 640 55c110-40 260-30 350 30 110 80 160 240 140 530l-50 20c0-130-20-240-80-310-60-70-140-110-240-115-100 0-170 50-220 120-30 50-50 130-60 210z" fill="#1b1517"/>
<path d="M500 250c60-110 180-170 330-160" fill="none" stroke="#36363a" stroke-width="12"/>
<!-- face -->
<path d="M522 470c10-130 110-265 240-272 120-8 240 60 300 175 40 90 45 210 40 310-10 200-140 340-275 345-140 0-270-170-300-340z" fill="url(#skin1)"/>
<!-- beard -->
<path d="M520 650c40 50 70 140 130 140 60-10 130-80 210-70 70-10 170-30 245-85-5 230-90 350-170 385-60 25-170 25-230-10-80-60-170-220-185-360z" fill="#2a1f1c"/>
<path d="M790 815c30-20 90-20 120 0-10 30-100 35-120 0z" fill="#bd766c"/>
<ellipse cx="855" cy="880" rx="60" ry="25" fill="#66534a"/>
<!-- eyes -->
<path d="M555 440c50-40 130-40 195-20l-10 20c-60-15-120-10-175 15z" fill="#2e2220"/>
<path d="M890 425c50-20 120-25 175-10l-5 25c-50-15-110-10-165 5z" fill="#2e2220"/>
<path d="M615 505c40-25 90-25 135 0-40 25-90 35-135 0z" fill="#b99a8e"/>
<circle cx="680" cy="505" r="22" fill="#181214"/>
<path d="M905 490c40-25 80-25 125-5-40 30-85 35-125 5z" fill="#b99a8e"/>
<circle cx="965" cy="490" r="22" fill="#181214"/>
</g>
<path d="M800 520c40 30 50 90 60 130-20 40-70 30-90 10 20-40 30-90 30-140z" fill="#c5a495" filter="url(#b8)"/>
<ellipse cx="838" cy="640" rx="28" ry="25" fill="#e0bfb0" filter="url(#b8)"/>
<path d="M780 690c30 10 80 10 120-5" fill="none" stroke="#7a5a50" stroke-width="6" filter="url(#b4)"/>
</g>
</g>
<text x="1425" y="607" font-size="14" fill="#fff" textLength="85" lengthAdjust="spacingAndGlyphs">Bruno Monte</text>

<!-- Contato tile -->
<rect x="1411" y="642" width="491" height="355" rx="6" fill="#35383b" stroke="#5b90ee" stroke-width="4"/>
<g clip-path="url(#ct)">
<rect x="1413" y="680" width="487" height="279" fill="url(#wall2)"/>
<g transform="translate(1400 630) scale(.33333)">
<path d="M1060 300l140-110 200 150-160 140zM1180 620l130-150 170 130-170 170z" fill="#c2a98f" opacity=".25" filter="url(#b8)"/>
<ellipse cx="110" cy="600" rx="100" ry="120" fill="#6f7a7e" opacity=".4" filter="url(#b30)"/>
<g filter="url(#b2)">
<!-- shirt -->
<path d="M330 1000c20-100 50-150 90-175l130-50c130 30 250 10 340-40 120 40 230 70 330 100 60 50 130 110 210 165z" fill="#201a1b"/>
<path d="M555 790c15 100 90 170 170 180 80-10 180-90 175-240-20-50-300-20-345 60z" fill="#a88474"/>
<!-- headphones back -->
<path d="M420 360c-50 60-50 180-30 280 20 50 60 70 100 60l20-140-30-200z" fill="#15181d"/>
<path d="M820 150c90 30 170 120 190 240l-90 30c-20-100-50-180-120-230z" fill="#14171c"/>
<path d="M870 210c30 40 50 90 60 150l-18 4c-10-50-20-100-55-140z" fill="#a89a8a"/>
<rect x="860" y="380" width="150" height="245" rx="45" fill="#15171c"/>
<rect x="930" y="490" width="35" height="70" rx="17" fill="#2b3036"/>
<!-- mic -->
<path d="M415 680c0 30 30 40 80 25 10 20 15 60 15 100" fill="none" stroke="#1a1c20" stroke-width="10"/>
<!-- hair -->
<path d="M450 290c10-60 20-110 20-140h360c40 60 70 170 90 260l-70 40c-20-120-60-190-150-190-100-10-200 0-250 30z" fill="#2a2020"/>
<!-- face -->
<path d="M455 330c30-70 150-120 330-115 30 100 80 280 80 400-40 100-150 180-250 190-90-30-150-130-160-300-10-50-10-120 0-175z" fill="url(#skin2)"/>
<path d="M465 380c30-50 70-70 105-60" fill="none" stroke="#3a2c28" stroke-width="14"/>
<path d="M625 315c50-20 110-10 150 40" fill="none" stroke="#3a2c28" stroke-width="14"/>
<ellipse cx="525" cy="405" rx="34" ry="20" fill="#b8aba4"/><circle cx="522" cy="403" r="16" fill="#262628"/>
<ellipse cx="695" cy="372" rx="34" ry="20" fill="#b8aba4"/><circle cx="698" cy="370" r="16" fill="#262628"/>
<path d="M570 495c15 8 45 8 60-2" stroke="#3c2620" stroke-width="10" fill="none"/>
<path d="M550 590c30-35 110-40 150 5-20 35-120 70-150-5z" fill="#b3766c"/>
<path d="M572 600c40-25 90-20 122-5-30 15-90 30-122 5z" fill="#2b1b18"/>
<path d="M572 590l50-12 30 6-70 14zM580 628l70-18-10 12-50 14z" fill="#d9cfc2"/>
</g>
<path d="M520 720c40 40 90 60 110 40 70-10 170-70 220-140-10 70-60 140-150 180-60 10-130-20-180-80z" fill="#786358" filter="url(#b8)"/>
<ellipse cx="600" cy="480" rx="60" ry="30" fill="#b87f6c" opacity=".7" filter="url(#b8)"/>
<path d="M560 530c50-10 110-10 150 15" fill="none" stroke="#7b6559" stroke-width="10" filter="url(#b8)"/>
<path d="M570 790c70 40 160 20 240-40" fill="none" stroke="#7f6558" stroke-width="14" filter="url(#b8)"/>
<!-- hand -->
<path d="M30 770c60-40 180-50 240-20 50 20 110 60 110 90-20 60-60 150-100 170H30z" fill="#dcbcab" filter="url(#b8)"/>
<ellipse cx="180" cy="800" rx="70" ry="45" fill="#ecd6ca" filter="url(#b14)"/>
<path d="M160 830c-20 50-20 100-30 150M250 810c-20 60-30 120-60 180" stroke="#c9a28e" stroke-width="12" fill="none" filter="url(#b8)"/>
</g>
</g>
<circle cx="1879" cy="665" r="15" fill="#0b62e0" stroke="#cfe0fb" stroke-width="2"/>
<rect x="1871" y="660" width="4" height="10" rx="2" fill="#fff"/><rect x="1877" y="658" width="4.5" height="14" rx="2" fill="#fff"/><rect x="1883.5" y="660" width="4" height="10" rx="2" fill="#fff"/>
<text x="1425" y="979" font-size="14" fill="#f1f3f4" textLength="166" lengthAdjust="spacingAndGlyphs">Contato R&amp;A Inteligência</text>

<!-- bottom bar -->
<text x="24" y="1040" font-size="15.5" fill="#fff" textLength="41" lengthAdjust="spacingAndGlyphs">07:37</text>
<rect x="77" y="1032" width="1" height="16" fill="#c8c8c8"/>
<text x="90" y="1040" font-size="15.5" fill="#fff" textLength="200" lengthAdjust="spacingAndGlyphs">Reunião Bruno Monte - ALI</text>
<rect x="678" y="1016" width="89" height="48" rx="24" fill="#27292b"/><rect x="718" y="1016" width="49" height="48" rx="24" fill="#35383b"/>
<path d="M698 1042l3-3.500 3 3.500" fill="none" stroke="#80868b" stroke-width="1.2" transform="translate(0 -2)"/>
<rect x="737.5" y="1030" width="8" height="14" rx="4" fill="none" stroke="#e8eaed" stroke-width="1.8"/><path d="M734 1039a7.500 7.500 0 0015 0M741.500 1047v3" class="ic" style="stroke-width:1.8"/>
<rect x="774" y="1016" width="88" height="48" rx="24" fill="#27292b"/><rect x="814" y="1016" width="48" height="48" rx="24" fill="#35383b"/>
<path d="M794 1042l3-3.500 3 3.500" fill="none" stroke="#80868b" stroke-width="1.2" transform="translate(0 -2)"/>
<rect x="829.5" y="1033" width="14" height="14" rx="1.5" fill="none" stroke="#e8eaed" stroke-width="2"/><path d="M845 1037l4-3v12l-4-3z" fill="#e8eaed"/>
<rect x="870" y="1016" width="55" height="48" rx="24" fill="#35383b"/>
<rect x="890" y="1033" width="16" height="14" rx="2" fill="none" stroke="#e8eaed" stroke-width="1.8"/><text x="898" y="1040" font-size="7.5" font-weight="bold" fill="#e8eaed" text-anchor="middle">CC</text>
<rect x="935" y="1016" width="55" height="48" rx="24" fill="#35383b"/>
<circle cx="962" cy="1040" r="9" class="ic"/><circle cx="959" cy="1037" r="1.2" fill="#e8eaed"/><circle cx="965" cy="1037" r="1.2" fill="#e8eaed"/><path d="M957.5 1042h9a4.500 4.500 0 01-9 0z" fill="#e8eaed"/>
<rect x="998" y="1016" width="56" height="48" rx="14" fill="#a0c2f8"/>
<rect x="1017" y="1033" width="18" height="14" rx="1.5" fill="none" stroke="#0b2a5e" stroke-width="2"/><path d="M1026 1035l3.500 4h-2v4h-3v-4h-2z" fill="#0b2a5e"/>
<rect x="1063" y="1016" width="55" height="48" rx="24" fill="#35383b"/>
<path d="M1085 1042l-3-3c-1-1-3 1-1 3l6 7c2 2 4 2 7 2 4 0 6-3 6-6v-12c0-2-3-2-3 0v6-9c0-2-3-2-3 0v9-11c0-2-3-2-3 0v11-9c0-2-3-2-3 0z" class="ic" style="stroke-width:1.6"/>
<rect x="1126" y="1016" width="36" height="48" rx="18" fill="#35383b"/>
<g fill="#e8eaed"><circle cx="1144" cy="1033" r="2"/><circle cx="1144" cy="1040" r="2"/><circle cx="1144" cy="1047" r="2"/></g>
<rect x="1170" y="1016" width="72" height="48" rx="24" fill="#dc2f2f"/>
<path d="M1199 1043c0-5 5-7 7-7s7 2 7 7" fill="none" stroke="#fff" stroke-width="2"/><circle cx="1199" cy="1043" r="2" fill="#fff"/><circle cx="1213" cy="1043" r="2" fill="#fff"/>
<circle cx="1693" cy="1040" r="9" class="ic" style="stroke-width:1.8"/><rect x="1692" y="1039" width="2" height="6" fill="#e8eaed"/><circle cx="1693" cy="1036" r="1.2" fill="#e8eaed"/>
<circle cx="1738" cy="1036" r="4.500" class="ic" style="stroke-width:1.8"/><path d="M1731 1047c0-5 14-5 14 0v1h-14z" fill="#e8eaed"/><path d="M1745 1032a4.500 4.500 0 010 8M1749 1048v-2c0-2-1-3-3-4" class="ic" style="stroke-width:1.8"/>
<circle cx="1752" cy="1017" r="10" fill="#4b4e52"/><text x="1752" y="1017" font-size="11" fill="#e8eaed" text-anchor="middle">3</text>
<path d="M1781 1031h17v18h-14l-3 3z" class="ic" style="stroke-width:1.8"/><path d="M1785 1035h9M1785 1039h9M1785 1043h6" stroke="#e8eaed" stroke-width="1.5"/>
<g fill="#e8eaed"><circle cx="1829" cy="1033" r="2"/><circle cx="1836" cy="1033" r="2"/><circle cx="1843" cy="1033" r="2"/><circle cx="1829" cy="1040" r="2"/><circle cx="1836" cy="1040" r="2"/><circle cx="1843" cy="1040" r="2"/><circle cx="1829" cy="1047" r="2"/><circle cx="1836" cy="1047" r="2"/><circle cx="1843" cy="1047" r="2"/></g>
<path d="M1880 1037v-3a5 5 0 0110 0v3M1892 1037h-15v14h7" class="ic" style="stroke-width:1.8"/><circle cx="1890" cy="1046" r="5.500" fill="#e8eaed"/><rect x="1889" y="1043" width="2" height="6" fill="#141414"/>
</svg>
</body></html>
